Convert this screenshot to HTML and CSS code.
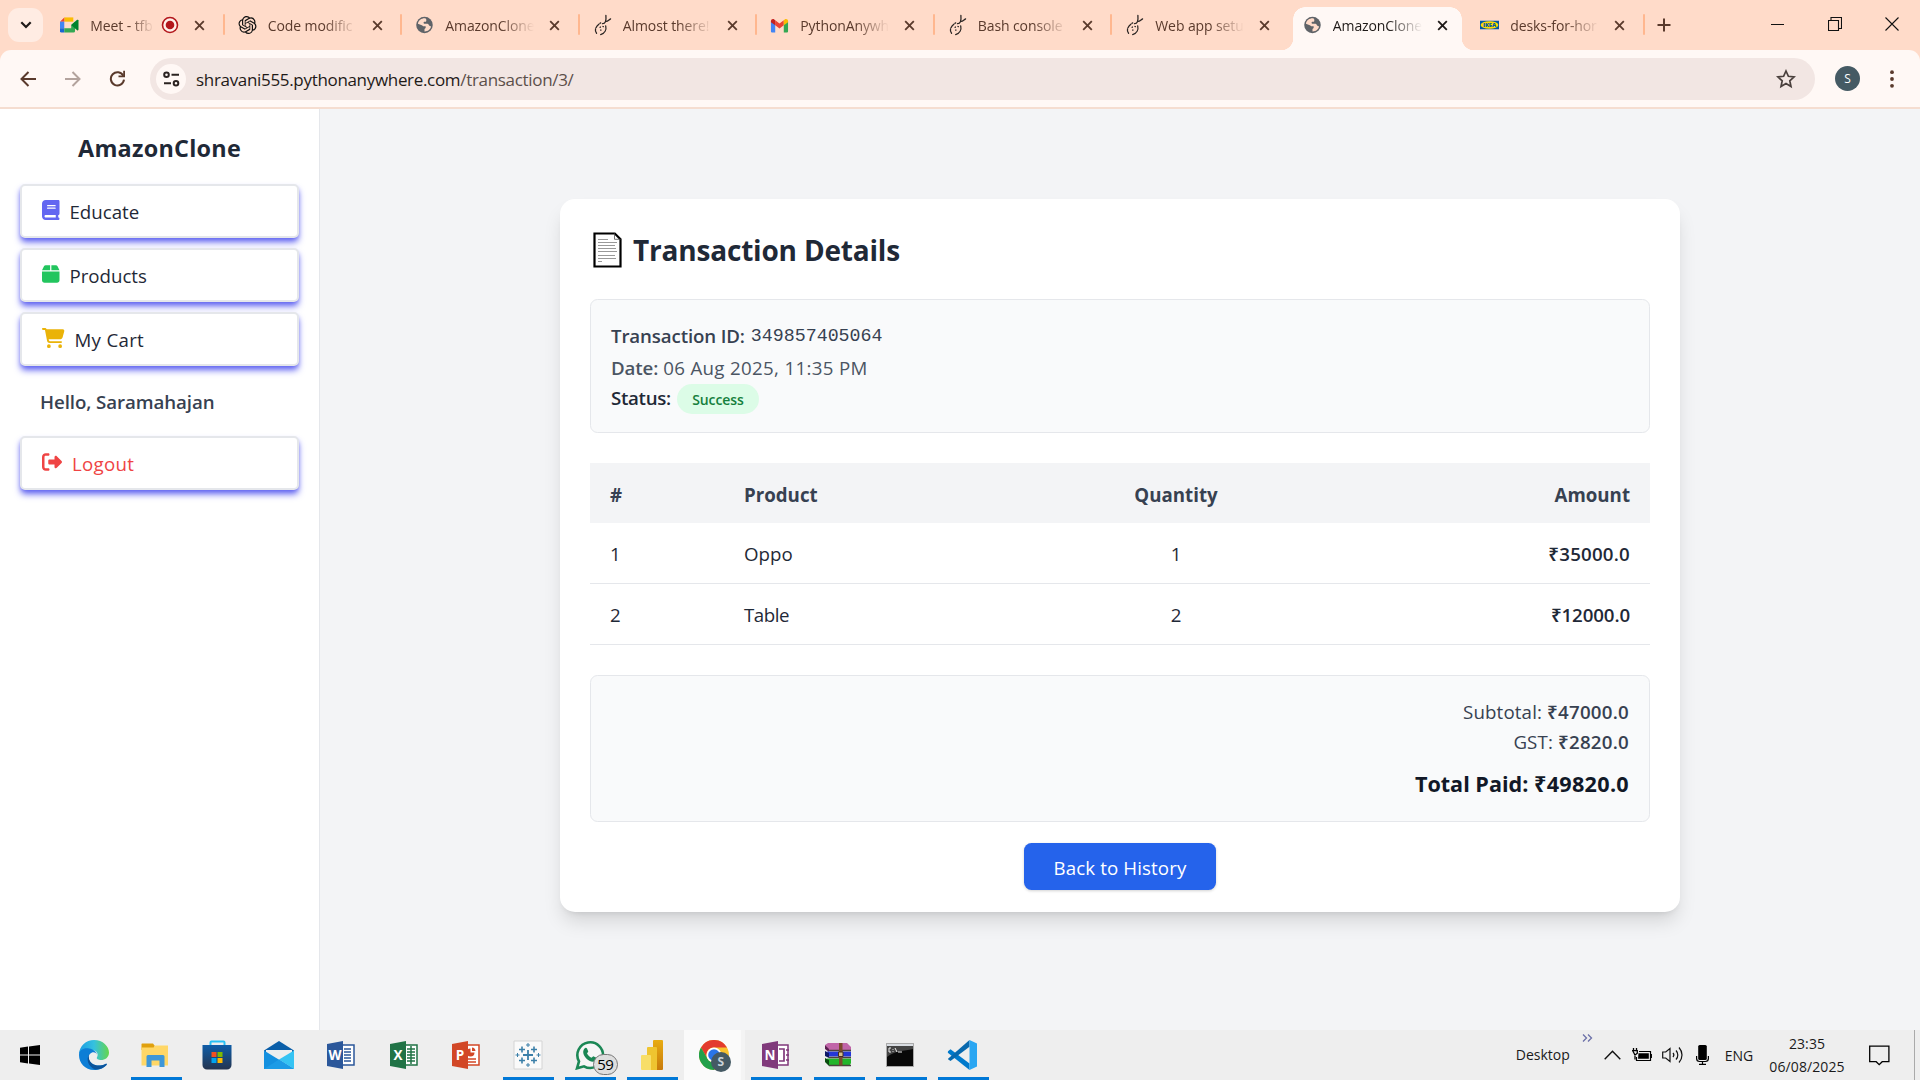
FILE: index.html
```html
<!DOCTYPE html>
<html lang="en">
<head>
<meta charset="utf-8">
<title>AmazonClone</title>
<link rel="stylesheet" href="styles.css">
</head>
<body>
<svg class="defs" width="0" height="0" aria-hidden="true">
  <symbol id="x" viewBox="0 0 12 12"><path d="M1.3 1.3l9.4 9.4M10.7 1.3l-9.4 9.4" stroke="currentColor" stroke-width="2" fill="none"/></symbol>
  <symbol id="globe" viewBox="0 0 20 20"><circle cx="10" cy="10" r="9.2" fill="#5f6368"/><path d="M11 2.6C7 2.2 3.200 4.600 2.700 8.500l4.300 1.700c1 .4 1.200 1.300 2.200 1.300h1.600c1 .2.700 1.500.2 2l-1 1v2.700c3.500.2 6.700-2.200 7.300-5.500l-1.800-.9c-.8-.8-1-2-2.300-2.300H9.600c-.8-.3-.9-1.700 0-2.100h1.300c.9 0 1.100-.8 1.100-1.500V4z" fill="#ffdbc9"/></symbol>
  <symbol id="snake" viewBox="0 0 20 24"><g fill="none" stroke="#2b2523" stroke-width="1.4" stroke-linecap="round"><path d="M3.500 21C.8 18 2.500 13 8 9.700" stroke-dasharray="5 1.500"/><path d="M8 22.500c4.500-1.500 6.500-5.500 5.500-9.500"/><path d="M8.200 17.200v.6M10.500 13.600l.4.200M7.400 14.600l.3-.4"/><path d="M10 10.500c3 0 4.300-2.500 3.700-9M13.800 8c1.800.2 3.200-1.700 5-2.700"/></g></symbol>
</svg>

<header class="browser">
  <div class="tabstrip">
    <button class="tab-search"><svg width="12" height="8" viewBox="0 0 12 8"><path d="M1.300 1.300L6 6l4.700-4.700" fill="none" stroke="#1f1a18" stroke-width="2.200"/></svg></button>
    <div class="tab">
      <svg class="fav" viewBox="0 0 20 18"><path d="M4.500 1H14v4.500H4.500z" fill="#fbbc04"/><path d="M0 5.500L4.500 1v4.500z" fill="#ea4335"/><path d="M0 5.500h4.500v7H0z" fill="#4285f4"/><path d="M0 12.500h4.500V17H1.500A1.500 1.500 0 0 1 0 15.500z" fill="#1967d2"/><path d="M4.500 12.500h7.300V9l4 -3.500V15.500A1.500 1.500 0 0 1 14.300 17H4.500z" fill="#34a853"/><path d="M11.800 9L18 3.600c.7-.5 1.500-.2 1.500.7v9.500c0 .8-.8 1.200-1.500.6z" fill="#00832d"/></svg>
      <span class="label short">Meet - tfb</span>
      <svg class="rec" viewBox="0 0 18 18"><circle cx="9" cy="9" r="7.500" fill="#fff1ea" stroke="#b3171c" stroke-width="1.600"/><circle cx="9" cy="9" r="4.300" fill="#b3171c"/></svg>
      <svg class="close"><use href="#x"/></svg>
    </div>
    <div class="tab">
      <svg class="fav" viewBox="0 0 24 24"><path fill="#111" d="M22.2819 9.8211a5.9847 5.9847 0 0 0-.5157-4.9108 6.0462 6.0462 0 0 0-6.5098-2.9A6.0651 6.0651 0 0 0 4.9807 4.1818a5.9847 5.9847 0 0 0-3.9977 2.9 6.0462 6.0462 0 0 0 .7427 7.0966 5.98 5.98 0 0 0 .511 4.9107 6.051 6.051 0 0 0 6.5146 2.9001A5.9847 5.9847 0 0 0 13.2599 24a6.0557 6.0557 0 0 0 5.7718-4.2058 5.9894 5.9894 0 0 0 3.9977-2.9001 6.0557 6.0557 0 0 0-.7475-7.0729zm-9.022 12.6081a4.4755 4.4755 0 0 1-2.8764-1.0408l.1419-.0804 4.7783-2.7582a.7948.7948 0 0 0 .3927-.6813v-6.7369l2.02 1.1686a.071.071 0 0 1 .038.052v5.5826a4.504 4.504 0 0 1-4.4945 4.4944zm-9.6607-4.1254a4.4708 4.4708 0 0 1-.5346-3.0137l.142.0852 4.783 2.7582a.7712.7712 0 0 0 .7806 0l5.8428-3.3685v2.3324a.0804.0804 0 0 1-.0332.0615L9.74 19.9502a4.4992 4.4992 0 0 1-6.1408-1.6464zM2.3408 7.8956a4.485 4.485 0 0 1 2.3655-1.9728V11.6a.7664.7664 0 0 0 .3879.6765l5.8144 3.3543-2.0201 1.1685a.0757.0757 0 0 1-.071 0l-4.8303-2.7865A4.504 4.504 0 0 1 2.3408 7.872zm16.5963 3.8558L13.1038 8.364 15.1192 7.2a.0757.0757 0 0 1 .071 0l4.8303 2.7913a4.4944 4.4944 0 0 1-.6765 8.1042v-5.6772a.79.79 0 0 0-.407-.667zm2.0107-3.0231l-.142-.0852-4.7735-2.7818a.7759.7759 0 0 0-.7854 0L9.409 9.2297V6.8974a.0662.0662 0 0 1 .0284-.0615l4.8303-2.7866a4.4992 4.4992 0 0 1 6.6802 4.66zM8.3065 12.863l-2.02-1.1638a.0804.0804 0 0 1-.038-.0567V6.0742a4.4992 4.4992 0 0 1 7.3757-3.4537l-.142.0805L8.704 5.459a.7948.7948 0 0 0-.3927.6813zm1.0976-2.3654l2.602-1.4998 2.6069 1.4998v2.9994l-2.5974 1.4997-2.6067-1.4997Z"/></svg>
      <span class="label">Code modific</span><svg class="close"><use href="#x"/></svg>
    </div>
    <div class="tab"><svg class="fav"><use href="#globe"/></svg><span class="label">AmazonClone</span><svg class="close"><use href="#x"/></svg></div>
    <div class="tab"><svg class="fav tall"><use href="#snake"/></svg><span class="label">Almost there!</span><svg class="close"><use href="#x"/></svg></div>
    <div class="tab">
      <svg class="fav" viewBox="0 0 20 16"><path d="M1 4v10.500A1.300 1.300 0 0 0 2.300 16H5.500V6z" fill="#4285f4"/><path d="M19 4v10.500a1.300 1.300 0 0 1-1.300 1.500H14.500V6z" fill="#34a853"/><path d="M5.500 3L10 6.500 14.500 3v5.300L10 11.800 5.500 8.300z" fill="#ea4335"/><path d="M14.500 3l1-.9C17 .900 19 2 19 3.800V5l-4.500 3.300z" fill="#fbbc04"/><path d="M5.500 3l-1-.9C3 .900 1 2 1 3.800V5l4.500 3.300z" fill="#c5221f"/></svg>
      <span class="label">PythonAnywh</span><svg class="close"><use href="#x"/></svg>
    </div>
    <div class="tab"><svg class="fav tall"><use href="#snake"/></svg><span class="label">Bash console</span><svg class="close"><use href="#x"/></svg></div>
    <div class="tab no-line"><svg class="fav tall"><use href="#snake"/></svg><span class="label">Web app setu</span><svg class="close"><use href="#x"/></svg></div>
    <div class="tab active no-line"><svg class="fav"><use href="#globe"/></svg><span class="label">AmazonClone</span><svg class="close"><use href="#x"/></svg></div>
    <div class="tab">
      <svg class="fav" viewBox="0 0 20 10"><path d="M0 .500h20v9H0z" fill="#0058a3"/><ellipse cx="10" cy="5" rx="9.300" ry="4" fill="#ffdb00"/><text class="ikea" x="10" y="7" text-anchor="middle">IKEA</text></svg>
      <span class="label">desks-for-hor</span><svg class="close"><use href="#x"/></svg>
    </div>
    <svg class="plus" width="14" height="14" viewBox="0 0 14 14"><path d="M7 .500v13M.500 7h13" stroke="#5a3a2c" stroke-width="2"/></svg>
    <div class="win">
      <svg width="14" height="14" viewBox="0 0 14 14"><path d="M0 7.500h13" stroke="#111"/></svg>
      <svg width="14" height="14" viewBox="0 0 14 14"><path d="M.500 3.500h10v10H.500zM3 3.500V.500h10.500V11.500H11" fill="none" stroke="#111" stroke-width="1.100"/></svg>
      <svg width="14" height="14" viewBox="0 0 14 14"><path d="M.500.500l13 13M13.500.500l-13 13" stroke="#111" stroke-width="1.100"/></svg>
    </div>
  </div>
  <div class="toolbar">
    <svg class="back" width="16" height="16" viewBox="0 0 16 16"><path d="M16 8H2M8.500 1L1.500 8l7 7" fill="none" stroke="#5a3a2c" stroke-width="2"/></svg>
    <svg class="fwd" width="16" height="16" viewBox="0 0 16 16"><path d="M0 8h14M7.500 1l7 7-7 7" fill="none" stroke="#b3a39d" stroke-width="2"/></svg>
    <svg class="reload" width="17" height="17" viewBox="0 0 17 17"><path d="M14.300 5.800A6.600 6.600 0 1 0 15 9.700" fill="none" stroke="#5a3a2c" stroke-width="2"/><path d="M16 .800v6.500H9.500V5.500h4.700V.800z" fill="#5a3a2c"/></svg>
    <div class="address">
      <span class="site"><svg width="17" height="16" viewBox="0 0 17 16"><g fill="none" stroke="#2b2321" stroke-width="2"><circle cx="3.500" cy="3.700" r="2.300"/><path d="M8.500 3.700h7.500M1 12.300h7"/><circle cx="13" cy="12.300" r="2.300"/></g></svg></span>
      <span class="url">shravani555.pythonanywhere.com<span class="path">/transaction/3/</span></span>
      <svg class="star" width="20" height="20" viewBox="0 0 20 20"><path d="M10 2l2.400 5.300 5.700.600-4.300 3.900 1.200 5.700-5-2.900-5 2.900 1.200-5.700L1.900 7.900l5.700-.600z" fill="none" stroke="#4a403d" stroke-width="1.700"/></svg>
    </div>
    <span class="avatar">S</span>
    <svg class="dots" width="4" height="18" viewBox="0 0 4 18"><g fill="#5a3a2c"><circle cx="2" cy="2.200" r="1.900"/><circle cx="2" cy="9" r="1.900"/><circle cx="2" cy="15.800" r="1.900"/></g></svg>
  </div>
</header>

<div class="page">
  <aside class="sidebar">
    <h1 class="brand">AmazonClone</h1>
    <nav class="menu">
      <a class="item"><svg width="17.500" height="20" viewBox="0 0 448 512"><path fill="#6366f1" d="M96 0C43 0 0 43 0 96L0 416c0 53 43 96 96 96l288 0 32 0c17.700 0 32-14.300 32-32s-14.300-32-32-32l0-64c17.700 0 32-14.300 32-32l0-320c0-17.700-14.300-32-32-32L384 0 96 0zm0 384l256 0 0 64L96 448c-17.700 0-32-14.300-32-32s14.300-32 32-32zm32-240c0-8.800 7.200-16 16-16l192 0c8.800 0 16 7.200 16 16s-7.200 16-16 16l-192 0c-8.800 0-16-7.200-16-16zm16 48l192 0c8.800 0 16 7.200 16 16s-7.200 16-16 16l-192 0c-8.800 0-16-7.200-16-16s7.200-16 16-16z"/></svg>Educate</a>
      <a class="item"><svg width="17.500" height="20" viewBox="0 0 448 512"><path fill="#22c55e" d="M50.700 58.500L0 160l208 0 0-128L93.700 32C75.500 32 58.900 42.300 50.700 58.500zM240 160l208 0L397.300 58.500C389.100 42.300 372.500 32 354.300 32L240 32l0 128zm208 32L0 192 0 416c0 35.300 28.700 64 64 64l320 0c35.300 0 64-28.700 64-64l0-224z"/></svg>Products</a>
      <a class="item"><svg width="22.500" height="20" viewBox="0 0 576 512"><path fill="#eab308" d="M0 24C0 10.700 10.700 0 24 0L69.500 0c22 0 41.500 12.800 50.600 32l411 0c26.300 0 45.500 25 38.600 50.400l-41 152.300c-8.500 31.400-37 53.300-69.500 53.300l-288.500 0 5.400 28.500c2.200 11.300 12.100 19.500 23.600 19.500L488 336c13.300 0 24 10.700 24 24s-10.700 24-24 24l-288.300 0c-34.600 0-64.300-24.600-70.700-58.500L77.400 54.500c-.7-3.800-4-6.500-7.900-6.500L24 48C10.700 48 0 37.300 0 24zM128 464a48 48 0 1 1 96 0 48 48 0 1 1 -96 0zm336-48a48 48 0 1 1 0 96 48 48 0 1 1 0-96z"/></svg><span class="wide">My Cart</span></a>
      <p class="hello">Hello, Saramahajan</p>
      <a class="item logout"><svg width="20" height="20" viewBox="0 0 512 512"><path fill="#ef4444" d="M377.900 105.900L500.700 228.700c7.200 7.200 11.300 17.100 11.300 27.300s-4.100 20.100-11.300 27.300L377.900 406.100c-6.400 6.400-15 9.900-24 9.900c-18.700 0-33.900-15.200-33.900-33.900l0-62.100-128 0c-17.700 0-32-14.300-32-32l0-64c0-17.700 14.300-32 32-32l128 0 0-62.100c0-18.700 15.200-33.900 33.900-33.900c9 0 17.600 3.600 24 9.900zM160 96L96 96c-17.700 0-32 14.300-32 32l0 256c0 17.700 14.300 32 32 32l64 0c17.700 0 32 14.300 32 32s-14.300 32-32 32l-64 0c-53 0-96-43-96-96L0 128C0 75 43 32 96 32l64 0c17.700 0 32 14.300 32 32s-14.300 32-32 32z"/></svg><span class="wide">Logout</span></a>
    </nav>
  </aside>

  <main class="content">
    <section class="card">
      <h2 class="title">
        <svg width="29" height="36" viewBox="0 0 29 36"><path d="M1.500 1.500h20.300l5.700 5.700v27.300h-26z" fill="#fff" stroke="#000" stroke-width="2.200"/><path d="M21.500 1.500v5.800h6" fill="none" stroke="#555" stroke-width=".800"/><path d="M5 7.500h10M5 10.500h19M5 13.500h17M5 16.500h18M5 19.500h19M5 23.500h17M5 26.500h18M5 29.500h4" stroke="#999" stroke-width="1"/></svg>
        Transaction Details
      </h2>
      <div class="box info">
        <p class="line id"><b>Transaction ID:</b> <span class="mono">349857405064</span></p>
        <p class="line date"><b>Date:</b> <span class="when">06 Aug 2025, 11:35 PM</span></p>
        <p class="line status"><b>Status:</b><span class="badge">Success</span></p>
      </div>
      <table class="items">
        <thead><tr><th class="num">#</th><th class="prod">Product</th><th class="qty">Quantity</th><th class="amt">Amount</th></tr></thead>
        <tbody>
          <tr><td>1</td><td>Oppo</td><td class="qty">1</td><td class="amt">₹35000.0</td></tr>
          <tr><td>2</td><td class="tight">Table</td><td class="qty">2</td><td class="amt narrow">₹12000.0</td></tr>
        </tbody>
      </table>
      <div class="box totals">
        <p class="sum">Subtotal: <b>₹47000.0</b></p>
        <p class="sum">GST: <b>₹2820.0</b></p>
        <p class="total">Total Paid: <span class="grand">₹49820.0</span></p>
      </div>
      <a class="btn">Back to History</a>
    </section>
  </main>
</div>

<footer class="taskbar">
  <div class="apps">
    <div class="app"><svg width="20" height="20" viewBox="0 0 20 20"><path d="M0 2.800l8-1.200v8H0zM9 1.500L20 0v9.600H9zM0 10.400h8v8.100L0 17.300zM9 10.400h11V20L9 18.600z"/></svg></div>
    <div class="app"><svg width="30" height="30" viewBox="0 0 30 30"><defs><linearGradient id="e1" x1="0" x2="1"><stop offset="0" stop-color="#1b9de2"/><stop offset=".5" stop-color="#35c1e0"/><stop offset="1" stop-color="#66d64b"/></linearGradient></defs><path d="M0 14C.500 6 7 0 15 0c9 0 15 6.500 15 12.500 0 5-4 7.500-8 7.500-2.500 0-5-1-4-2.700 2-3.500-.5-7-5-7C8 8 3 9 0 14z" fill="url(#e1)"/><path d="M0 15C0 10 5 7.500 10 8.500c4 .700 7.500 3 8 6-1-2-3-2.700-5-2-5 2-4 8 0 11 4 2.800 9 2.500 13.500.500 1-.500 1.500 0 1 1C25 28 20 30 15 30 6 30 0 23 0 15z" fill="#0d7ed6"/><path d="M10 14.500c-3 5-1 12 6 15 5 .300 9-2 11.500-4.500.700-1 0-1.500-1-1-4.500 2-9.500 2.300-13.500-.500-3-2.300-3.800-6-3-9z" fill="#0b539b"/></svg></div>
    <div class="app open"><svg width="28" height="26" viewBox="0 0 28 26"><path d="M1 1.500h11l1.500 2V8H.500V2z" fill="#e0a00d"/><path d="M.500 5.500h12l2-2H27v20H.500z" fill="#ffd767"/><path d="M5.500 25V14.500a1.500 1.500 0 0 1 1.500-1.500h15a1.500 1.500 0 0 1 1.500 1.500V25h-5v-6.500h-8V25z" fill="#3e97d8"/></svg></div>
    <div class="app"><svg width="30" height="30" viewBox="0 0 30 30"><defs><linearGradient id="s1" x2="0" y2="1"><stop stop-color="#0e5da8"/><stop offset="1" stop-color="#24344f"/></linearGradient></defs><path d="M8.500 6V2.500a1 1 0 0 1 1-1h12a1 1 0 0 1 1 1V6" fill="none" stroke="#28c1f5" stroke-width="2"/><path d="M.500 5h29v20a4.500 4.500 0 0 1-4.500 4.500H5A4.500 4.500 0 0 1 .500 25z" fill="url(#s1)"/><path d="M9.500 12h5v5h-5z" fill="#f25022"/><path d="M15.500 12h5v5h-5z" fill="#7fba00"/><path d="M9.500 18h5v5h-5z" fill="#00a4ef"/><path d="M15.500 18h5v5h-5z" fill="#ffb900"/></svg></div>
    <div class="app"><svg width="30" height="28" viewBox="0 0 30 28"><path d="M0 9.500L15 0l15 9.500V12H0z" fill="#0a5ea8"/><path d="M2 9h26v9H2z" fill="#eee"/><path d="M0 9.500L22 23 30 28H0z" fill="#1490df"/><path d="M30 9.500V28L15 18.500z" fill="#35c3f3"/><path d="M0 28l15-9.500L30 28z" fill="#1c9be6"/></svg></div>
    <div class="app"><svg class="office" viewBox="0 0 28 28"><path d="M14 4h13v20H14z" fill="#fff" stroke="#2b579a" stroke-width="1.500"/><path d="M17 8h7M17 11h7M17 14h7M17 17h7M17 20h7" stroke="#2b579a" stroke-width="1.500"/><path d="M0 3l16-3v28L0 25z" fill="#2b579a"/><text x="8" y="19" class="ol">W</text></svg></div>
    <div class="app"><svg class="office" viewBox="0 0 28 28"><path d="M14 4h13v20H14z" fill="#fff" stroke="#217346" stroke-width="1.500"/><path d="M17 8h8M17 11h8M17 14h8M17 17h8M17 20h8M21 5v18" stroke="#217346" stroke-width="1.500"/><path d="M0 3l16-3v28L0 25z" fill="#217346"/><text x="8" y="19" class="ol">X</text></svg></div>
    <div class="app"><svg class="office" viewBox="0 0 28 28"><path d="M14 4h13v20H14z" fill="#fff" stroke="#d24726" stroke-width="1.500"/><path d="M16 18h8M16 21h8" stroke="#d24726" stroke-width="1.500"/><path d="M18.500 7.500a4 4 0 1 0 4 4h-4z" fill="#d24726"/><path d="M20 6.500a4 4 0 0 1 3.500 3.500H20z" fill="#d24726"/><path d="M0 3l16-3v28L0 25z" fill="#d24726"/><text x="8" y="19" class="ol">P</text></svg></div>
    <div class="app open"><svg width="30" height="30" viewBox="0 0 30 30"><path d="M1 1h28v28H1z" fill="#fafafa" stroke="#d4d4d4"/><g stroke="#3b7fa8" fill="none"><path d="M15 10v10M10 15h10" stroke-width="1.800"/><path d="M9 6.500v6M6 9.500h6M21 6.500v6M18 9.500h6M9 17.500v6M6 20.500h6M21 17.500v6M18 20.500h6" stroke-width="1.600"/><path d="M15 3v4M13 5h4M15 23v4M13 25h4M4.500 13v4M2.500 15h4M25.500 13v4M23.500 15h4"/></g></svg></div>
    <div class="app open"><svg width="30" height="30" viewBox="0 0 30 30"><path d="M2 28.300l2-7A12.800 12.800 0 1 1 9 26.300z" fill="#f6f6f6" stroke="#1b8755" stroke-width="2.600"/><path d="M9.500 8.500c1-1 2-.8 2.500 0l1.300 3-1.300 2c1 2 2.500 3.300 4.500 4.300l1.800-1.500 3.200 1.500c.3 2.700-1.500 4-3.500 4-5-.5-9.500-5-9.800-9.500 0-1.500.5-3 1.300-3.800z" fill="#1b8755"/></svg><span class="count">59</span></div>
    <div class="app open"><svg width="22" height="30" viewBox="0 0 22 30"><defs><linearGradient id="p1" x2="0" y2="1"><stop stop-color="#e8ac12"/><stop offset="1" stop-color="#c87a0b"/></linearGradient></defs><path d="M12 1a1 1 0 0 1 1-1h8a1 1 0 0 1 1 1v28a1 1 0 0 1-1 1h-9z" fill="url(#p1)"/><path d="M6 8a1 1 0 0 1 1-1h8a1 1 0 0 1 1 1v22H6z" fill="#efc430"/><path d="M0 16a1 1 0 0 1 1-1h8a1 1 0 0 1 1 1v14H1a1 1 0 0 1-1-1z" fill="#f8de68"/></svg></div>
    <div class="app chrome"><svg width="30" height="30" viewBox="0 0 30 30"><circle cx="15" cy="15" r="15" fill="#f9c22e"/><path d="M2 7.500A15 15 0 0 1 28 7.500H15A7.500 7.500 0 0 0 8 18z" fill="#e33b2e"/><path d="M2 7.500A15 15 0 0 0 15 30l6.500-11.300a7.500 7.500 0 0 1-13 0z" fill="#22a04a"/><circle cx="15" cy="15" r="7.500" fill="#fff"/><circle cx="15" cy="15" r="5.800" fill="#2a75e8"/></svg><span class="profile">S</span></div>
    <div class="app open"><svg class="office" viewBox="0 0 28 28"><path d="M14 4h12v20H14z" fill="#fff" stroke="#80397b" stroke-width="1.500"/><path d="M17 8h5v12h-5M24 9h3M24 14h3M24 19h3" fill="none" stroke="#80397b" stroke-width="1.700"/><path d="M0 3l16-3v28L0 25z" fill="#80397b"/><text x="8" y="19" class="ol">N</text></svg></div>
    <div class="app open"><svg class="rar" width="28" height="24" viewBox="0 0 28 24"><path d="M1 2l3-2h19l4 4v3H5z" fill="#c065a8"/><path d="M1 2l4 4v3L1 6z" fill="#5b1e50"/><path d="M3 8.500h24v5H5z" fill="#2437d8"/><path d="M1 8l4 2v5l-4-2z" fill="#0d1866"/><path d="M3 15.500h24V20l-1 2H5z" fill="#22b52a"/><path d="M1 15l4 2v6l-4-4z" fill="#0b4d10"/><path d="M5 7.500h22M5 14.500h22M5 22.500h22" stroke="#4b4440" stroke-width="1.400"/><path d="M15 0h3.500v22.500H15z" fill="#7b4a2d"/><path d="M14.500 9h4.500v4.500h-4.500z" fill="#d8bf8c" stroke="#44301c"/></svg></div>
    <div class="app open"><svg width="28" height="24" viewBox="0 0 28 24"><path d="M.500.500h27v23H.500z" fill="#080808" stroke="#aaa"/><path d="M1 1h26v2H1z" fill="#d9dde2"/><path d="M1 3h26v3C18 8 8 8 1 14z" fill="#444"/><path d="M5 5h-2v4h2M7 6v.800M7 8v.800M9 5l2 4M12 9h4" fill="none" stroke="#eee"/></svg></div>
    <div class="app open"><svg width="30" height="30" viewBox="0 0 30 30"><path d="M1 11.200l2.500-2 19 14.300V30L.800 12.700z" fill="#007acc"/><path d="M1 18.700L22.500 0v6.700L3.500 21 1 19.300z" fill="#0869ae"/><path d="M22.500 0L30 3.500v23L22.500 30z" fill="#2aa6f2"/></svg></div>
  </div>
  <div class="tray">
    <span class="desk">Desktop</span>
    <svg class="more" width="11" height="8" viewBox="0 0 11 8"><path d="M1 .500L4.500 4 1 7.500M6 .500L9.500 4 6 7.500" fill="none" stroke="#6b70a8" stroke-width="1.300"/></svg>
    <svg class="up" width="17" height="10" viewBox="0 0 17 10"><path d="M.700 9.300L8.500 1.300l7.800 8" fill="none" stroke="#111" stroke-width="1.400"/></svg>
    <svg class="bat" width="21" height="14" viewBox="0 0 21 14"><path d="M7 3.500h11.500v9H4.500V9" fill="none" stroke="#000" stroke-width="1.200"/><path d="M6.500 5.200h10.300v5.600H6z"/><path d="M19.300 6v4M1.500 0v2.500M4.500 0v2.500M.700 2.700h4.600v2.500L3 7zM3 6.500v5" fill="none" stroke="#000" stroke-width="1.300"/></svg>
    <svg class="vol" width="22" height="18" viewBox="0 0 22 18"><path d="M.700 6h3L8 2.500v13L3.700 12h-3z" fill="none" stroke="#111" stroke-width="1.200"/><path d="M11 7a3 3 0 0 1 0 4M14 4.500a6.500 6.500 0 0 1 0 9M17 1.500c4 4.500 4 10.500 0 15" fill="none" stroke="#111" stroke-width="1.200"/></svg>
    <svg class="mic" width="13" height="20" viewBox="0 0 13 20"><rect x="2.200" y="0" width="8.600" height="15" rx="1.500"/><path d="M.600 11v2.500a3 3 0 0 0 3 3h5.800a3 3 0 0 0 3-3V11M6.500 16.500v3M3 19.400h7" fill="none" stroke="#000" stroke-width="1.200"/></svg>
    <span class="lang">ENG</span>
    <span class="clock"><span>23:35</span><span>06/08/2025</span></span>
    <svg class="note" width="21" height="21" viewBox="0 0 21 21"><path d="M.700 1.200h19.200v15.500h-6.700l-3 3-3-3H.700z" fill="none" stroke="#000" stroke-width="1.300"/></svg>
    <span class="peek"></span>
  </div>
</footer>
</body>
</html>
```
FILE: styles.css
```css
*{box-sizing:border-box}
body{margin:0;width:1920px;height:1080px;overflow:hidden;display:flex;flex-direction:column;background:#f3f4f6;color:#1f2937;font-family:"Open Sans","Noto Sans",sans-serif;font-size:18.7px}
h1,h2,p{margin:0}
svg{display:block;flex:none}
.defs{position:absolute}

/* browser chrome */
.browser{height:109px;flex:none;background:#ffdbc9}
.tabstrip{height:50px;display:flex;align-items:flex-start;padding-left:8px}
.tab-search{width:35px;height:34px;margin:8px 4px 0 0;padding:0;border:0;border-radius:11px;background:#ffece3;display:flex;align-items:center;justify-content:center}
.tab{position:relative;width:177.5px;height:50px;flex:none;display:flex;align-items:center;padding-left:13.3px;color:#5a3a2c;font-size:14px}
.tab::after{content:"";position:absolute;right:0;top:14px;width:2px;height:21px;border-radius:1px;background:#ffb78f}
.no-line::after{display:none}
.fav{width:19px;height:18px;margin-right:11px}
.fav.tall{height:22px}
.ikea{font:900 6px "Open Sans",sans-serif;fill:#0058a3}
.label{width:92px;height:24px;line-height:25px;letter-spacing:-.1px;overflow:hidden;white-space:nowrap;margin-right:12px;-webkit-mask-image:linear-gradient(90deg,#000 60%,transparent 97%);mask-image:linear-gradient(90deg,#000 60%,transparent 97%)}
.label.short{width:66px;margin-right:5px}
.rec{width:18px;height:18px;margin-right:15px}
.close{width:11px;height:11px}
.active{color:#1f1a18}
.active::before{content:"";position:absolute;left:-9px;top:7px;width:193px;height:43px;background:radial-gradient(circle at 0 0,transparent 12px,#fff8f5 12.5px) 0 100%/12px 12px no-repeat,radial-gradient(circle at 12px 0,transparent 12px,#fff8f5 12.5px) 100% 100%/12px 12px no-repeat,linear-gradient(#fff8f5,#fff8f5) 12px 12px/169px 31px no-repeat,radial-gradient(circle at 12px 12px,#fff8f5 11.5px,transparent 12px) 12px 0/12px 12px no-repeat,radial-gradient(circle at 0 12px,#fff8f5 11.5px,transparent 12px) 169px 0/12px 12px no-repeat,linear-gradient(#fff8f5,#fff8f5) 24px 0/145px 13px no-repeat}
.active>*{position:relative}
.plus{margin:18px 0 0 12px}
.win{display:flex;gap:43px;margin:17px 21.5px 0 auto}
.toolbar{height:59px;display:flex;align-items:center;background:#fff8f5;border-radius:11px 11px 0 0;border-bottom:2px solid #f5ddd0;padding:0 26px 0 20px}
.fwd{margin-left:29px}
.reload{margin-left:28px}
.address{width:1665px;height:42px;margin:0 20px 0 24px;border-radius:21px;background:#f2e6e3;display:flex;align-items:center;padding:0 19px 0 6px}
.site{width:30px;height:30px;border-radius:50%;background:#fff8f5;display:flex;align-items:center;justify-content:center}
.url{margin-left:10px;padding-top:1px;font-size:17px;letter-spacing:-.32px;color:#1f1a18;white-space:nowrap}
.path{color:#5c4f4a}
.star{margin-left:auto}
.avatar{width:25px;height:25px;border-radius:50%;background:#455a64;color:#fff;font-size:12px;line-height:25px;text-align:center}
.dots{margin-left:auto}

/* page */
.page{height:921px;flex:none;display:flex}
.sidebar{width:320px;background:#fff;border-right:1px solid #e5e7eb;padding:21px 20px 0}
.brand{font-size:23.4px;line-height:36px;letter-spacing:.25px;text-align:center;font-weight:700}
.menu{margin-top:18px;display:flex;flex-direction:column;gap:10px}
.item{height:54px;display:flex;align-items:center;padding:0 20px;border:2px solid #e5e7eb;border-radius:5px;background:#fff;box-shadow:0 5px 7.5px -1.25px #6366f1,0 2.5px 5px -2.5px #6366f1;letter-spacing:-.02px}
.item svg{margin:-3px 10px 0 0}
.wide{letter-spacing:.3px}
.hello{height:50px;padding:0 20px;line-height:51px;font-weight:600;color:#374151;letter-spacing:-.08px}
.logout{color:#ef4444}
.content{flex:1;padding:90px 240px 0}
.card{width:1120px;height:713px;background:#fff;border-radius:15px;padding:30px 30px 22px;display:flex;flex-direction:column;box-shadow:0 12.5px 19px -3.75px rgba(0,0,0,.13),0 5px 7.5px -5px rgba(0,0,0,.13)}
.card>*{flex:none}
.title{height:40px;display:flex;align-items:center;gap:11px;padding:2px 0 0 3px;font-size:28px;letter-spacing:-.19px;font-weight:700}
.box{border:1px solid #e5e7eb;border-radius:7.5px;background:#f9fafb}
.info{margin-top:30px;height:134px;padding:20px 20px}
b{font-weight:600}
.line{display:flex;align-items:center;gap:5px;letter-spacing:-.13px;height:31px}
.id{color:#374151}
.date{color:#4b5563;height:32px}
.when{letter-spacing:.33px}
.status{gap:6px;height:29px;letter-spacing:-.3px}
.mono{font-family:"Liberation Mono",monospace;font-size:18.3px;letter-spacing:0;margin:1px 0 0 1px}
.badge{height:30px;width:82px;margin-top:3px;border-radius:15px;background:#dcfce7;color:#15803d;font-size:14px;font-weight:600;line-height:31px;text-align:center;letter-spacing:-.1px}
.items{margin-top:30px;width:1060px;border-collapse:separate;border-spacing:0;table-layout:fixed;text-align:left}
.items th{height:60px;padding:2px 20px 0;background:#f3f4f6;color:#374151;font-weight:700}
.items td{height:61px;padding:1px 20px 0;border-bottom:1px solid #e5e7eb}
.num{width:134px}
.prod{width:342px}
.items .qty{text-align:center;width:220px}
.items .amt{text-align:right}
.items td.amt{font-weight:600;letter-spacing:.22px}
.items td.narrow{letter-spacing:-.1px}
.items td.tight{letter-spacing:-.45px}
.totals{margin-top:30px;height:147px;padding:21px 20px;text-align:right}
.sum{color:#374151;line-height:30px;letter-spacing:.15px}
.sum b{letter-spacing:.25px}
.total{margin-top:9px;font-size:21.6px;line-height:35px;font-weight:700;color:#111827}
.grand{letter-spacing:.3px}
.btn{align-self:center;width:192px;height:47px;margin-top:21px;border-radius:7.5px;background:#2563eb;color:#fff;line-height:49px;text-align:center;letter-spacing:.12px;box-shadow:0 1px 3px rgba(0,0,0,.18)}

/* taskbar */
.taskbar{height:50px;flex:none;display:flex;justify-content:space-between;background:#eee}
.apps{display:flex}
.app{position:relative;width:62.08px;height:50px;display:flex;align-items:center;justify-content:center}
.app:first-child svg{margin-left:-2px}
.open::after{content:"";position:absolute;left:6.5px;bottom:0;width:51px;height:3px;background:#0078d7}
.app:nth-child(2) svg{margin-left:2px}
.office{width:28px;height:28px}
.ol{font:700 13.5px "Open Sans",sans-serif;fill:#fff;text-anchor:middle}
.count{position:absolute;left:34px;top:24px;width:25px;height:21px;border:1px solid #777;border-radius:11px;background:#dedede;color:#000;font-size:15px;line-height:19px;text-align:center;letter-spacing:-.5px}
.chrome::before{content:"";position:absolute;left:1px;top:0;width:57px;height:50px;background:#fafafa;border-right:1px solid #ccc;border-bottom:3px solid #0078d7}
.chrome::after{content:"";position:absolute;left:58px;top:0;width:4px;height:50px;background:#f4f4f4;border-bottom:3px solid #5ea9e4}
.chrome svg{position:relative}
.profile{position:absolute;left:28px;top:22px;width:20px;height:20px;border-radius:50%;background:#455a64;color:#c9d3d8;font-size:12px;font-weight:700;line-height:20px;text-align:center}
.tray{display:flex;align-items:center;font-size:14px;color:#1a1a1a}
.desk{margin-top:-1px}
.more{margin:-35px 10px 0 12px}
.up{margin-left:1px}
.bat{margin-left:11px}
.vol{margin-left:9px}
.mic{margin-left:12px}
.lang{margin-left:16px;letter-spacing:-.1px}
.clock{width:80px;margin:0 22px 0 14px;display:flex;flex-direction:column;align-items:center;line-height:23px;letter-spacing:.1px}
.peek{width:1px;height:50px;margin:0 5px 0 24px;background:#aaa}
```
